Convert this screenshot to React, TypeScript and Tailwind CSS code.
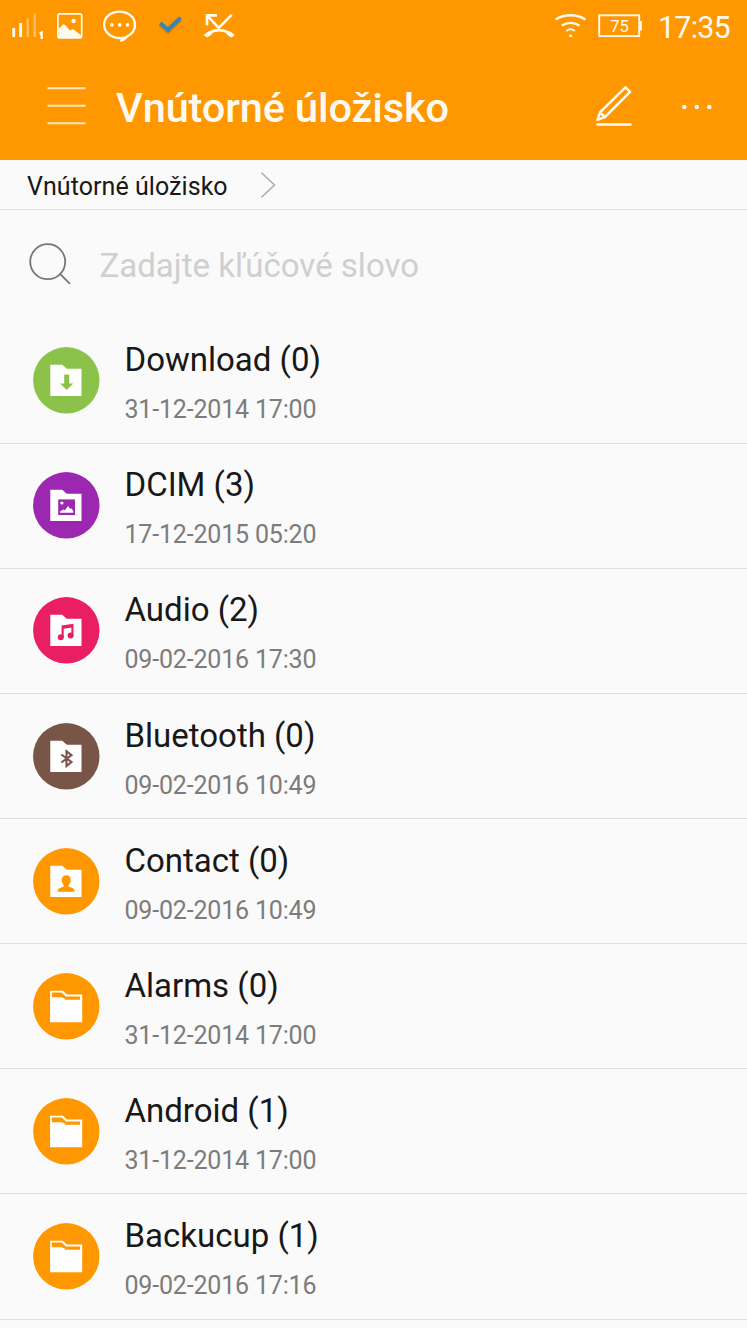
import type { ReactNode } from "react";

type Kind = "download" | "image" | "music" | "bluetooth" | "contact" | "folder";

interface Entry {
  name: string;
  date: string;
  kind: Kind;
  color: string;
}

const entries: Entry[] = [
  { name: "Download (0)", date: "31-12-2014 17:00", kind: "download", color: "text-[#8bc34a]" },
  { name: "DCIM (3)", date: "17-12-2015 05:20", kind: "image", color: "text-[#9c27b0]" },
  { name: "Audio (2)", date: "09-02-2016 17:30", kind: "music", color: "text-[#e91e63]" },
  { name: "Bluetooth (0)", date: "09-02-2016 10:49", kind: "bluetooth", color: "text-[#795548]" },
  { name: "Contact (0)", date: "09-02-2016 10:49", kind: "contact", color: "text-[#ff9800]" },
  { name: "Alarms (0)", date: "31-12-2014 17:00", kind: "folder", color: "text-[#ff9800]" },
  { name: "Android (1)", date: "31-12-2014 17:00", kind: "folder", color: "text-[#ff9800]" },
  { name: "Backucup (1)", date: "09-02-2016 17:16", kind: "folder", color: "text-[#ff9800]" },
];

const glyphs: Record<Kind, ReactNode> = {
  download: <path d="M31.2 27.5h5v9h4.1l-6.6 6.6-6.6-6.6h4.1z" fill="currentColor" />,
  image: (
    <>
      <rect x="25.2" y="27.4" width="16.8" height="15.6" fill="currentColor" />
      <circle cx="28.9" cy="31" r="1.6" fill="#fff" />
      <path d="M27 40.800v-1.400l3.400-1.900 1.400.8 3.300-4.300 2 2.700 1.200-.5 1.900 2.500v2.100z" fill="#fff" />
    </>
  ),
  music: (
    <>
      <path d="M28.6 28.6l11.900-1.800v3.500l-9.800 1.500v8.400h-2.100zM38.400 28h2.100v10.600h-2.100z" fill="currentColor" />
      <circle cx="27.8" cy="40.2" r="3" fill="currentColor" />
      <circle cx="37.6" cy="38.6" r="3" fill="currentColor" />
    </>
  ),
  bluetooth: (
    <path d="M28.300 31.500l10.200 7.500-5 4V28.200l5 4-10.200 7.300" fill="none" stroke="currentColor" strokeWidth="2.100" />
  ),
  contact: (
    <path
      d="M33.200 27.300c2.800 0 4.500 1.900 4.500 4.800 0 2-.8 3.800-2 5v1.600c3.100.8 6 1.800 6 4.400v.6h-17v-.6c0-2.600 2.900-3.600 6-4.400v-1.600c-1.200-1.200-2-3-2-5 0-2.900 1.700-4.800 4.500-4.800z"
      fill="currentColor"
    />
  ),
  folder: null,
};

function FolderBadge({ kind, color }: { kind: Kind; color: string }) {
  return (
    <svg width="67" height="67" viewBox="0 0 67 67" className={"shrink-0 " + color}>
      <circle cx="33.3" cy="33.3" r="33.2" fill="currentColor" />
      {kind === "folder" ? (
        <>
          <path d="M17.100 17.700h12.600l4.300 3.900h15.200v27.600H17.100z" fill="#fff" />
          <path d="M18.900 19.600h9.700l4.300 3.800h14.200v3.300H32.200l-3.200-1.600H18.900z" fill="currentColor" />
          <path d="M18.900 24.300h9.800l3.500 1.500v1H18.900z" fill="#fff" />
        </>
      ) : (
        <path d="M17.300 17.800h11.900l4.600 3.900h14.700v27.200H17.300z" fill="#fff" />
      )}
      {glyphs[kind]}
    </svg>
  );
}

function StatusBar() {
  return (
    <div className="flex h-[52px] items-center text-[#fffaf0]">
      <svg width="250" height="52" viewBox="0 0 250 52" fill="none" stroke="currentColor">
        <path d="M13.700 28v9M20.700 23v14" strokeWidth="2.800" />
        <path d="M27.700 18.500V37M34.700 13.500V37" strokeWidth="2.400" opacity=".4" />
        <path d="M39.500 33.800l2.200-1.300V39" strokeWidth="2.200" />
        <rect x="57.900" y="13.900" width="23.800" height="24" rx="2" strokeWidth="1.700" />
        <path d="M58.500 29l4.200-4.300c.7-.7 1.500-.7 2.200 0l5.100 5.800 2.200-1.100c.8-.3 1.500-.1 2.100.5l6.700 5V38H58.500z" fill="currentColor" stroke="none" />
        <circle cx="73.600" cy="21" r="2.200" fill="currentColor" stroke="none" />
        <path d="M126.500 36.600c5.200-2.200 8.500-6.600 8.500-11.900 0-7.400-6.800-13.100-15.500-13.100S104.100 17.300 104.100 24.700s6.800 13.100 15.600 13.300l1.800.1" strokeWidth="2.300" />
        <path d="M121.600 37l-2 4.900c4.300-.2 7.200-2.400 8.900-6.200z" fill="currentColor" stroke="none" />
        <g fill="currentColor" stroke="none">
          <circle cx="111.800" cy="24.900" r="1.800" />
          <circle cx="119.700" cy="24.900" r="1.800" />
          <circle cx="127.600" cy="24.900" r="1.800" />
        </g>
        <path d="M160.200 25.100l7.800 6.600 12.500-12" stroke="#976b2c" strokeWidth="4" opacity=".45" />
        <path d="M160.200 22.900l7.800 6.800 12.500-11.900" stroke="#3187b8" strokeWidth="4" />
        <path d="M217 15.400h-10v9.800M207.200 15.600l11.500 12.200 13-12.900" strokeWidth="2.600" />
        <path d="M205 35.800c7.500-7.200 20.500-7.200 28.300 0" strokeWidth="2.600" />
        <path d="M203.600 35.300l5.200-4 3.800 2.500-5.200 3.800zM234.900 35.300l-5.200-4-3.800 2.500 5.200 3.800z" fill="currentColor" stroke="none" />
      </svg>
      <svg width="90" height="52" viewBox="550 0 90 52" className="ml-auto overflow-visible" fill="none" stroke="currentColor">
        <path d="M555.700 19.400c8.700-5.600 21-5.600 29.700 0" strokeWidth="2.400" />
        <path d="M561.700 25.700c5.300-3.800 12.500-3.800 17.800 0" strokeWidth="2.200" />
        <path d="M566.200 31c2.600-2 6.100-2 8.700 0" strokeWidth="2" />
        <circle cx="570.600" cy="35.800" r="1.500" fill="currentColor" stroke="none" />
        <rect x="599.200" y="15.300" width="40" height="20.800" strokeWidth="1.900" />
        <path d="M640.800 21v9.500" strokeWidth="2.200" />
        <text x="610.300" y="32" fill="currentColor" stroke="none" fontSize="16.500" className="font-[Roboto,sans-serif]">75</text>
      </svg>
      <span className="ml-[18px] mr-[17px] w-[72px] whitespace-nowrap pt-[3px] text-[30.500px] leading-[36px] tracking-[-0.800px]">17:35</span>
    </div>
  );
}

export default function App() {
  return (
    <div className="h-[1328px] w-[747px] overflow-hidden bg-[#fafafa] font-[Roboto,sans-serif] text-[#181818]">
      <header className="h-[160px] bg-[#ff9800]">
        <StatusBar />
        <div className="flex h-[108px] items-center pl-[47px] text-[#fffaf0]">
          <svg width="39" height="40" viewBox="0 0 39 40" stroke="currentColor" strokeWidth="2.100" className="shrink-0 opacity-80">
            <path d="M.5 2.200h38M.5 19.800h38M.5 37.200h38" />
          </svg>
          <h1 className="ml-[30px] whitespace-nowrap pt-[3px] text-[41.500px] font-medium leading-[48px] tracking-[-0.120px]">Vnútorné úložisko</h1>
          <svg width="38" height="44" viewBox="0 0 38 44" fill="none" stroke="currentColor" strokeWidth="2.500" className="ml-auto mr-[48px] shrink-0">
            <path d="M2.500 35.800L5 28.300 30.500 3.400l4.600 4.400L9.900 33zM5 28.300L9.900 33" strokeLinejoin="round" />
            <path d="M1.500 40.600h35" />
          </svg>
          <svg width="32" height="8" viewBox="0 0 32 8" fill="currentColor" className="mr-[34px] mt-[2px] shrink-0">
            <circle cx="3.300" cy="4" r="2.300" />
            <circle cx="15.800" cy="4" r="2.300" />
            <circle cx="28.300" cy="4" r="2.300" />
          </svg>
        </div>
      </header>

      <nav className="flex h-[50px] items-center border-b border-[#e0e0e0] pl-[27px]">
        <span className="pt-[4px] text-[25px] leading-[30px] tracking-[0.060px]">Vnútorné úložisko</span>
        <svg width="16" height="28" viewBox="0 0 16 28" fill="none" stroke="#aaa" strokeWidth="1.500" className="ml-8">
          <path d="M1.500 1.700l13 12.300-13 12.300" />
        </svg>
      </nav>

      <div className="flex h-[108.500px] items-center pl-[29px]">
        <svg width="42" height="42" viewBox="0 0 42 42" fill="none" stroke="#777" strokeWidth="1.800">
          <circle cx="18.700" cy="18.700" r="17.500" />
          <path d="M31 30.800l10 10" />
        </svg>
        <span className="ml-[28.500px] pt-[3px] text-[33px] leading-[40px] text-[#cfcfcf]">Zadajte kľúčové slovo</span>
      </div>

      <ul>
        {entries.map((e) => (
          <li key={e.name} className="flex h-[125.150px] items-start border-b border-[#dedede] pl-[33px]">
            <div className="pt-[28.600px]">
              <FolderBadge kind={e.kind} color={e.color} />
            </div>
            <div className="ml-[24.500px] whitespace-nowrap pt-[21.700px]">
              <div className="text-[33px] leading-[40px]">{e.name}</div>
              <div className="mt-[15px] text-[25px] leading-[30px] tracking-[-0.180px] text-[#7c7c7c]">{e.date}</div>
            </div>
          </li>
        ))}
      </ul>
    </div>
  );
}
